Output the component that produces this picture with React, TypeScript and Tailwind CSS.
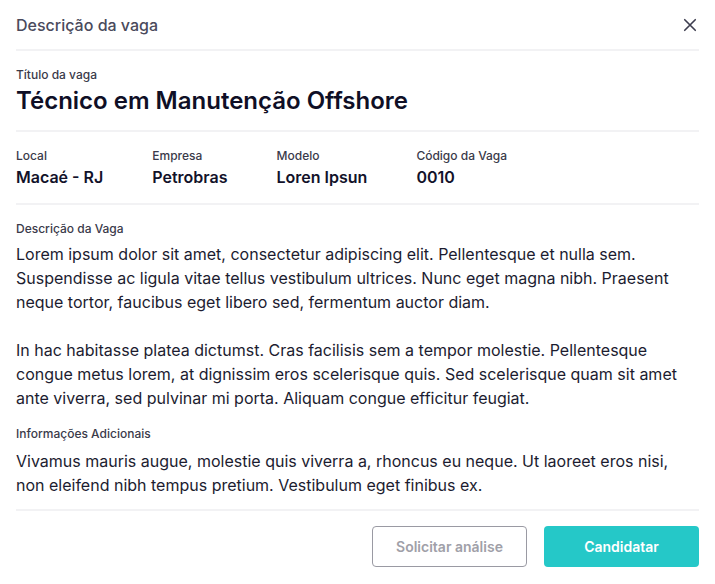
import React from "react";

const Divider = () => <div className="h-[2px] bg-[#f2f2f4]" />;

const Field = ({ label, value }: { label: string; value: string }) => (
  <div className="flex flex-col gap-[1px]">
    <span className="text-[12px] leading-4 font-medium text-[#3a3a4a]">{label}</span>
    <span className="text-[16px] leading-6 font-semibold text-[#12122a]">{value}</span>
  </div>
);

export default function App() {
  return (
    <div
      className="w-[715px] h-[584px] bg-white rounded-lg px-4 flex flex-col"
      style={{ fontFamily: "Inter, 'Noto Sans', sans-serif" }}
    >
      <div className="h-[49px] flex items-center justify-between">
        <span className="text-[16px] font-medium text-[#4a4a5c]">Descrição da vaga</span>
        <svg width="18" height="18" viewBox="0 0 24 24" fill="none" stroke="#3d3d4f" strokeWidth="2.2" strokeLinecap="round">
          <path d="M5 5L19 19M19 5L5 19" />
        </svg>
      </div>
      <Divider />
      <div className="pt-4 pb-[13px] flex flex-col gap-[2px]">
        <span className="text-[12px] leading-4 font-medium text-[#3a3a4a]">Título da vaga</span>
        <span className="text-[24px] leading-8 font-semibold text-[#0f0f26]">Técnico em Manutenção Offshore</span>
      </div>
      <Divider />
      <div className="pt-4 pb-[14px] flex gap-[49px]">
        <Field label="Local" value="Macaé - RJ" />
        <Field label="Empresa" value="Petrobras" />
        <Field label="Modelo" value="Loren Ipsun" />
        <Field label="Código da Vaga" value="0010" />
      </div>
      <Divider />
      <div className="pt-4 flex flex-col gap-[5px]">
        <span className="text-[12px] leading-4 font-medium text-[#3a3a4a]">Descrição da Vaga</span>
        <div className="text-[16px] leading-6 text-[#1c1c30]">
          <p>
            Lorem ipsum dolor sit amet, consectetur adipiscing elit. Pellentesque et nulla sem. Suspendisse ac ligula vitae tellus vestibulum ultrices. Nunc eget magna nibh. Praesent neque tortor, faucibus eget libero sed, fermentum auctor diam.
          </p>
          <br />
          <p>
            In hac habitasse platea dictumst. Cras facilisis sem a tempor molestie. Pellentesque congue metus lorem, at dignissim eros scelerisque quis. Sed scelerisque quam sit amet ante viverra, sed pulvinar mi porta. Aliquam congue efficitur feugiat.
          </p>
        </div>
      </div>
      <div className="pt-4 pb-[12px] flex flex-col gap-[7px]">
        <span className="text-[12px] leading-4 font-medium text-[#3a3a4a]">Informações Adicionais</span>
        <p className="text-[16px] leading-6 text-[#1c1c30]">
          Vivamus mauris augue, molestie quis viverra a, rhoncus eu neque. Ut laoreet eros nisi, non eleifend nibh tempus pretium. Vestibulum eget finibus ex.
        </p>
      </div>
      <Divider />
      <div className="pt-[15px] flex justify-end gap-[17px]">
        <button className="w-[155px] h-[41px] rounded-[4px] border border-[#9a9aa3] text-[14px] font-semibold text-[#a0a0a8]">
          Solicitar análise
        </button>
        <button className="w-[155px] h-[41px] rounded-[4px] bg-[#25c8c8] text-[14px] font-semibold text-white">
          Candidatar
        </button>
      </div>
    </div>
  );
}
